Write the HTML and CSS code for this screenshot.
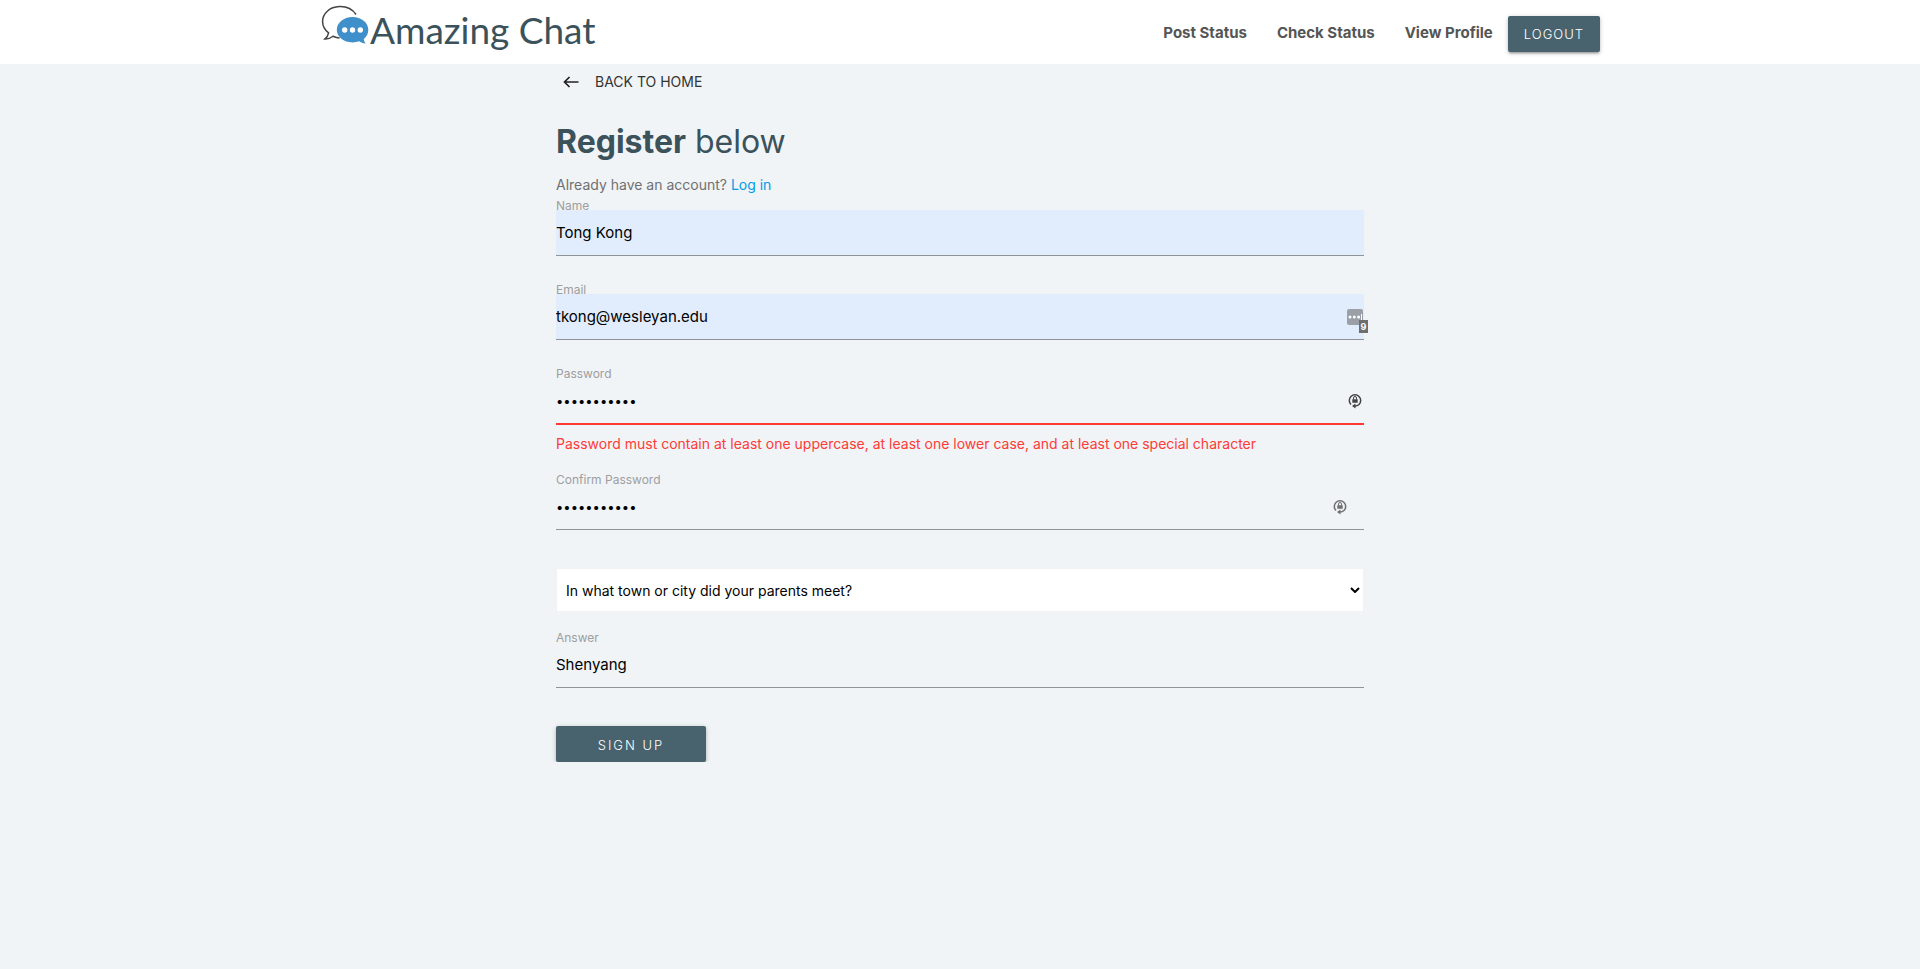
FILE: index.html
```html
<!DOCTYPE html>
<html lang="en">
<head>
<meta charset="utf-8">
<title>Amazing Chat</title>
<link rel="stylesheet" href="styles.css">
</head>
<body>
<header class="navbar">
  <nav class="nav-inner">
    <a class="brand" href="#">
      <svg class="brand-icon" viewBox="0 0 50 44" aria-hidden="true">
        <path d="M36 11.500C32 5.500 26 3.400 19.500 3.600 9.500 4 2.600 10.500 2.600 18.500c0 4.800 2.400 8.600 6 11.400-.5 2.600-1.600 4.400-3.600 6 3.400.1 6-1 8-2.700 2.100.9 4.300 1.600 6.600 1.800" transform="translate(0 -1)" fill="none" stroke="#444" stroke-width="1.500"/>
        <path d="M32.500 13c8.800 0 15.800 5.600 15.800 12.800 0 3.800-1.700 6.900-4.500 9.200.1 1.800.8 3.200 2 4.500-2.800-.1-5-1-6.700-2.200-2 .7-4.200 1.100-6.600 1.100-8.800 0-15.700-5.500-15.700-12.600S23.700 13 32.500 13z" fill="#3f8fcb"/>
        <g fill="#fff"><circle cx="24.700" cy="26" r="2.700"/><circle cx="32.500" cy="26" r="2.700"/><circle cx="40.300" cy="26" r="2.700"/></g>
      </svg>
      <span class="brand-name">Amazing Chat</span>
    </a>
    <div class="nav-links">
      <a class="nav-link" href="#">Post Status</a>
      <a class="nav-link" href="#">Check Status</a>
      <a class="nav-link" href="#">View Profile</a>
      <button class="btn btn-logout" type="button">LOGOUT</button>
    </div>
  </nav>
</header>
<main class="page">
  <a class="back" href="#">
    <svg class="back-icon" viewBox="0 0 16 12" aria-hidden="true"><path d="M15.500 6H1.500M6.500 1 1.500 6l5 5" fill="none" stroke="#222" stroke-width="1.700"/></svg>
    BACK TO HOME
  </a>
  <h1 class="title"><b>Register</b> below</h1>
  <p class="hint">Already have an account? <a href="#">Log in</a></p>
  <form class="form">
    <div class="field">
      <label for="name">Name</label>
      <input class="filled" id="name" type="text" value="Tong Kong">
    </div>
    <div class="field">
      <label for="email">Email</label>
      <div class="control">
        <input class="filled" id="email" type="email" value="tkong@wesleyan.edu">
        <span class="manager" aria-hidden="true">
          <svg viewBox="0 0 16 16"><rect width="16" height="16" rx="2" fill="#9b9fa8"/><g fill="#fff"><circle cx="3" cy="8" r="1.500"/><circle cx="7.300" cy="8" r="1.500"/><circle cx="11.600" cy="8" r="1.500"/><path d="M14 5h1v6h-1z"/></g></svg>
          <span class="count">9</span>
        </span>
      </div>
    </div>
    <div class="field">
      <label for="password">Password</label>
      <div class="control">
        <input class="invalid" id="password" type="password" value="Shenyang12#">
        <svg class="key" viewBox="0 0 14 16" aria-hidden="true"><path d="M3 11.500A5.700 5.700 0 1 1 11 11.500Q9.500 13 7 13" fill="none" stroke="#444" stroke-width="1.500"/><path d="M7.500 10.500v5L4 13zM4.300 6.200h5.400v3.600H4.300z" fill="#444"/><path d="M5.500 6.500V5a1.500 1.500 0 0 1 3 0v1.500" fill="none" stroke="#444"/></svg>
      </div>
      <p class="error">Password must contain at least one uppercase, at least one lower case, and at least one special character</p>
    </div>
    <div class="field">
      <label for="confirm">Confirm Password</label>
      <div class="control">
        <input id="confirm" type="password" value="Shenyang12#">
        <svg class="key key-inset" viewBox="0 0 14 16" aria-hidden="true"><path d="M3 11.500A5.700 5.700 0 1 1 11 11.500Q9.500 13 7 13" fill="none" stroke="#444" stroke-width="1.500"/><path d="M7.500 10.500v5L4 13zM4.300 6.200h5.400v3.600H4.300z" fill="#444"/><path d="M5.500 6.500V5a1.500 1.500 0 0 1 3 0v1.500" fill="none" stroke="#444"/></svg>
      </div>
    </div>
    <div class="select">
      <select aria-label="Security question"><option>In what town or city did your parents meet?</option></select>
      <svg class="chevron" viewBox="0 0 10 6" aria-hidden="true"><path d="M1 1l4 4 4-4" fill="none" stroke="#000" stroke-width="2"/></svg>
    </div>
    <div class="field">
      <label for="answer">Answer</label>
      <input id="answer" type="text" value="Shenyang">
    </div>
    <button class="btn btn-signup" type="button">SIGN UP</button>
  </form>
</main>
</body>
</html>
```
FILE: styles.css
```css
* { box-sizing: border-box; }
body {
  margin: 0;
  background: #f0f4f7;
  color: #222;
  font: 14px/24px Inter, Roboto, sans-serif;
}
a { text-decoration: none; }
.navbar { background: #fff; }
.nav-inner {
  display: flex;
  justify-content: space-between;
  align-items: flex-start;
  max-width: 1280px;
  height: 64px;
  margin: 0 auto;
}
.brand { display: flex; color: #3b525b; }
.brand-icon { width: 50px; height: 44px; margin-top: 4px; }
.brand-name { font: 37px/60px Lato, sans-serif; }
.nav-links { display: flex; align-items: center; height: 68px; }
.nav-link { padding: 0 15px 2px; color: #555; font-size: 15px; font-weight: 700; }
.btn {
  height: 36px;
  border: 0;
  border-radius: 2px;
  background: #48636e;
  color: #fff;
  font: 300 13px/36px Inter, sans-serif;
  box-shadow: 0 2px 2px rgba(0, 0, 0, .14), 0 3px 1px -2px rgba(0, 0, 0, .12), 0 1px 5px rgba(0, 0, 0, .2);
}
.btn-logout { padding: 0 16px; letter-spacing: 1px; }
.btn-signup { width: 150px; margin-top: 38px; letter-spacing: 2px; }
.page { max-width: 808px; margin: 0 auto; }
.back {
  display: flex;
  align-items: center;
  gap: 16px;
  height: 36px;
  padding-left: 7px;
  color: #333;
}
.back-icon { width: 16px; height: 12px; }
.title {
  margin: 22px 0 0;
  color: #3b525b;
  font-size: 32px;
  line-height: 40px;
  font-weight: 400;
}
.title b { font-weight: 700; }
.hint { margin: 11px 0 5px; color: #707070; }
.hint a { color: #039be5; }
.form { display: flex; flex-direction: column; align-items: stretch; }
.field { display: flex; flex-direction: column; }
.field + .field { margin-top: 30px; }
.field label { color: #9e9e9e; font-size: 12px; line-height: 8px; }
.field input {
  width: 100%;
  height: 46px;
  padding: 0;
  border: 0;
  border-bottom: 1px solid #8f9498;
  outline: 0;
  background: transparent;
  color: #000;
  font: 15px Inter, sans-serif;
}
.field input[type="password"] { font-size: 13px; }
.field .filled { background: #e1edfc; }
.field .invalid { height: 47px; border-bottom: 2px solid #ff3b36; }
.control { position: relative; display: flex; }
.manager { position: absolute; right: 1px; top: 15px; width: 16px; height: 16px; }
.manager svg { display: block; }
.count {
  position: absolute;
  left: 12px;
  top: 11px;
  width: 9px;
  background: #6e6e6e;
  color: #fff;
  font: bold 9px/13px Inter, sans-serif;
  text-align: center;
}
.key { position: absolute; right: 2px; top: 15px; width: 14px; height: 16px; }
.key-inset { right: 17px; opacity: .75; }
.error { margin: 7px 0 0; color: #ff3b36; }
.field:has(.error) + .field { margin-top: 20px; }
.select { position: relative; margin: 38px 0 22px; }
.select select {
  display: block;
  width: 100%;
  height: 44px;
  padding: 0 9px;
  border: 1px solid #f2f2f2;
  border-radius: 0;
  appearance: none;
  background: #fff;
  color: #000;
  font: 14px Inter, sans-serif;
}
.chevron { position: absolute; right: 4px; top: 19px; width: 10px; height: 6px; }
.btn-signup { align-self: flex-start; }
```
